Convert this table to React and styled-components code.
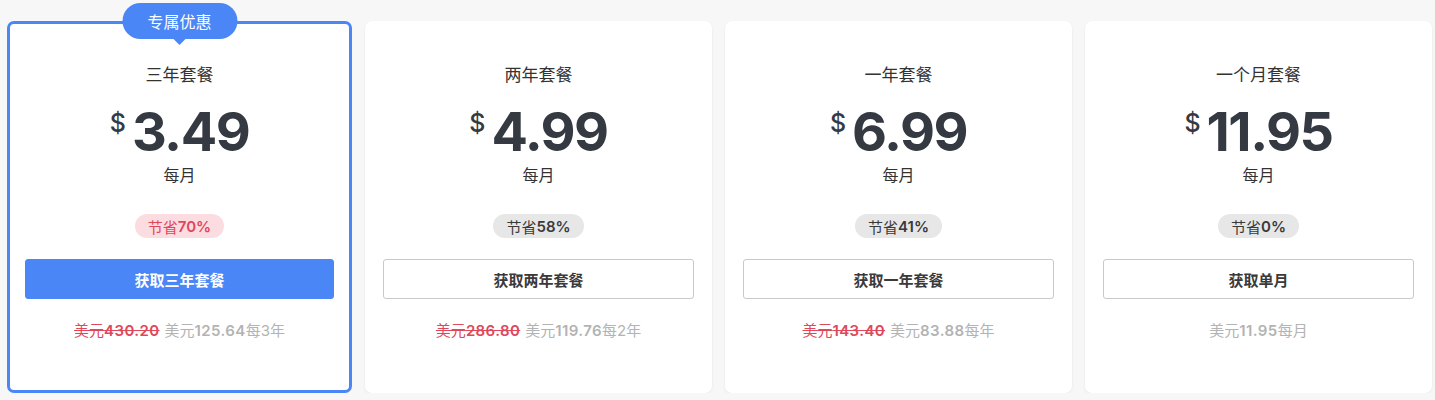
import React from 'react'
import styled, { createGlobalStyle } from 'styled-components'

const GlobalStyle = createGlobalStyle`
  body {
    margin: 0;
    background: #f7f7f7;
    font-family: "Inter", "Noto Sans CJK SC", sans-serif;
  }
`

const Page = styled.div`
  display: grid;
  grid-template-columns: 345px 347px 347px 347px;
  gap: 13px;
  padding: 21px 0 0 7px;
`

const Card = styled.div`
  position: relative;
  box-sizing: border-box;
  height: 372px;
  background: #fff;
  border-radius: 7px;
  border: 3px solid ${p => (p.featured ? '#4a86f6' : 'transparent')};
  box-shadow: ${p => (p.featured ? 'none' : '0 1px 3px rgba(0, 0, 0, 0.07)')};
  padding: 39px 15px 0;
  display: flex;
  flex-direction: column;
  align-items: center;
`

const Ribbon = styled.div`
  position: absolute;
  top: -21px;
  left: 50%;
  transform: translateX(-50%);
  width: 115px;
  height: 36px;
  border-radius: 18px;
  background: #4a86f6;
  color: #fff;
  font-size: 16px;
  display: flex;
  align-items: center;
  justify-content: center;
  &::after {
    content: '';
    position: absolute;
    bottom: -6px;
    left: 50%;
    margin-left: -7px;
    border-left: 7px solid transparent;
    border-right: 7px solid transparent;
    border-top: 7px solid #4a86f6;
  }
`

const Title = styled.div`
  font-size: 17px;
  line-height: 24px;
  color: #333;
`

const PriceRow = styled.div`
  display: flex;
  align-items: flex-start;
  margin-top: 18px;
  color: #353a42;
`

const Dollar = styled.span`
  font-size: 25px;
  font-weight: 500;
  line-height: 1;
  margin-top: 6px;
  margin-right: 6px;
`

const Amount = styled.span`
  font-size: 54px;
  font-weight: 700;
  line-height: 1;
  letter-spacing: -1.5px;
`

const Period = styled.div`
  font-size: 16px;
  line-height: 24px;
  color: #333;
  margin-top: 4px;
`

const Save = styled.div`
  margin-top: 27px;
  height: 24px;
  padding: 0 13px;
  border-radius: 12px;
  display: flex;
  align-items: center;
  font-size: 15px;
  background: ${p => (p.hot ? '#fbdde1' : '#e7e7e7')};
  color: ${p => (p.hot ? '#e0475b' : '#3a3a3a')};
  & b {
    font-weight: 600;
  }
`

const BuyButton = styled.button`
  margin-top: 21px;
  width: 100%;
  height: 40px;
  box-sizing: border-box;
  border-radius: 3px;
  font-family: inherit;
  font-size: 15px;
  font-weight: 700;
  cursor: pointer;
  border: 1px solid ${p => (p.primary ? '#4a86f6' : '#c9c9c9')};
  background: ${p => (p.primary ? '#4a86f6' : '#fff')};
  color: ${p => (p.primary ? '#fff' : '#3a3a3a')};
`

const Footer = styled.div`
  margin-top: 22px;
  font-size: 15px;
  line-height: 20px;
  color: #b3b3b3;
  display: flex;
  gap: 5px;
  & b {
    font-weight: 600;
    letter-spacing: 0.4px;
  }
`

const Old = styled.s`
  color: #e0475b;
`

const plans = [
  { title: '三年套餐', price: '3.49', save: '70%', cta: '获取三年套餐', old: '430.20', total: '125.64', per: '每3年', featured: true },
  { title: '两年套餐', price: '4.99', save: '58%', cta: '获取两年套餐', old: '286.80', total: '119.76', per: '每2年' },
  { title: '一年套餐', price: '6.99', save: '41%', cta: '获取一年套餐', old: '143.40', total: '83.88', per: '每年' },
  { title: '一个月套餐', price: '11.95', save: '0%', cta: '获取单月', total: '11.95', per: '每月' },
]

export default function App() {
  return (
    <>
      <GlobalStyle />
      <Page>
        {plans.map(p => (
          <Card key={p.title} featured={p.featured}>
            {p.featured && <Ribbon>专属优惠</Ribbon>}
            <Title>{p.title}</Title>
            <PriceRow>
              <Dollar>$</Dollar>
              <Amount>{p.price}</Amount>
            </PriceRow>
            <Period>每月</Period>
            <Save hot={p.featured}>节省<b>{p.save}</b></Save>
            <BuyButton primary={p.featured}>{p.cta}</BuyButton>
            <Footer>
              {p.old && <Old>美元<b>{p.old}</b></Old>}
              <span>美元<b>{p.total}</b>{p.per}</span>
            </Footer>
          </Card>
        ))}
      </Page>
    </>
  )
}
